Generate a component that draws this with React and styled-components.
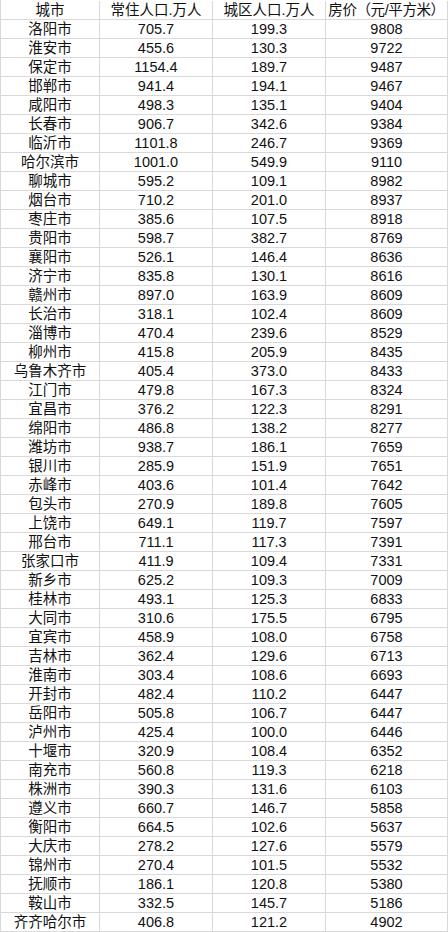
import React from "react";
import styled, { createGlobalStyle } from "styled-components";

const GlobalStyle = createGlobalStyle`
  html, body {
    margin: 0;
    padding: 0;
    background: #fff;
  }
  body {
    font-family: "Liberation Sans", "Noto Sans CJK SC", sans-serif;
  }
`;

const Sheet = styled.div`
  width: 448px;
  box-sizing: border-box;
  padding-top: 1px;
  border-left: 1px solid #d9d9d9;
  display: grid;
  grid-template-columns: 99px 113px 113px 122px;
  grid-auto-rows: 19px;
`;

const Cell = styled.div`
  box-sizing: border-box;
  border-right: 1px solid #d9d9d9;
  border-bottom: 1px solid #d9d9d9;
  display: flex;
  align-items: center;
  justify-content: center;
  font-size: 14.5px;
  line-height: 18px;
  color: #111;
  white-space: nowrap;
  overflow: visible;
  letter-spacing: ${({ $tight }) => ($tight ? "-0.4px" : "0")};
`;

const rows = [
  ["洛阳市", "705.7", "199.3", "9808"],
  ["淮安市", "455.6", "130.3", "9722"],
  ["保定市", "1154.4", "189.7", "9487"],
  ["邯郸市", "941.4", "194.1", "9467"],
  ["咸阳市", "498.3", "135.1", "9404"],
  ["长春市", "906.7", "342.6", "9384"],
  ["临沂市", "1101.8", "246.7", "9369"],
  ["哈尔滨市", "1001.0", "549.9", "9110"],
  ["聊城市", "595.2", "109.1", "8982"],
  ["烟台市", "710.2", "201.0", "8937"],
  ["枣庄市", "385.6", "107.5", "8918"],
  ["贵阳市", "598.7", "382.7", "8769"],
  ["襄阳市", "526.1", "146.4", "8636"],
  ["济宁市", "835.8", "130.1", "8616"],
  ["赣州市", "897.0", "163.9", "8609"],
  ["长治市", "318.1", "102.4", "8609"],
  ["淄博市", "470.4", "239.6", "8529"],
  ["柳州市", "415.8", "205.9", "8435"],
  ["乌鲁木齐市", "405.4", "373.0", "8433"],
  ["江门市", "479.8", "167.3", "8324"],
  ["宜昌市", "376.2", "122.3", "8291"],
  ["绵阳市", "486.8", "138.2", "8277"],
  ["潍坊市", "938.7", "186.1", "7659"],
  ["银川市", "285.9", "151.9", "7651"],
  ["赤峰市", "403.6", "101.4", "7642"],
  ["包头市", "270.9", "189.8", "7605"],
  ["上饶市", "649.1", "119.7", "7597"],
  ["邢台市", "711.1", "117.3", "7391"],
  ["张家口市", "411.9", "109.4", "7331"],
  ["新乡市", "625.2", "109.3", "7009"],
  ["桂林市", "493.1", "125.3", "6833"],
  ["大同市", "310.6", "175.5", "6795"],
  ["宜宾市", "458.9", "108.0", "6758"],
  ["吉林市", "362.4", "129.6", "6713"],
  ["淮南市", "303.4", "108.6", "6693"],
  ["开封市", "482.4", "110.2", "6447"],
  ["岳阳市", "505.8", "106.7", "6447"],
  ["泸州市", "425.4", "100.0", "6446"],
  ["十堰市", "320.9", "108.4", "6352"],
  ["南充市", "560.8", "119.3", "6218"],
  ["株洲市", "390.3", "131.6", "6103"],
  ["遵义市", "660.7", "146.7", "5858"],
  ["衡阳市", "664.5", "102.6", "5637"],
  ["大庆市", "278.2", "127.6", "5579"],
  ["锦州市", "270.4", "101.5", "5532"],
  ["抚顺市", "186.1", "120.8", "5380"],
  ["鞍山市", "332.5", "145.7", "5186"],
  ["齐齐哈尔市", "406.8", "121.2", "4902"],
];

const header = ["城市", "常住人口.万人", "城区人口.万人", "房价（元/平方米）"];

const App = () => {
  return (
    <>
      <GlobalStyle />
      <Sheet>
        {header.map((h, i) => (
          <Cell key={"h" + i} $tight={i === 3}>
            {h}
          </Cell>
        ))}
        {rows.map((row) =>
          row.map((v, i) => <Cell key={row[0] + i}>{v}</Cell>)
        )}
      </Sheet>
    </>
  );
};

export default App;
